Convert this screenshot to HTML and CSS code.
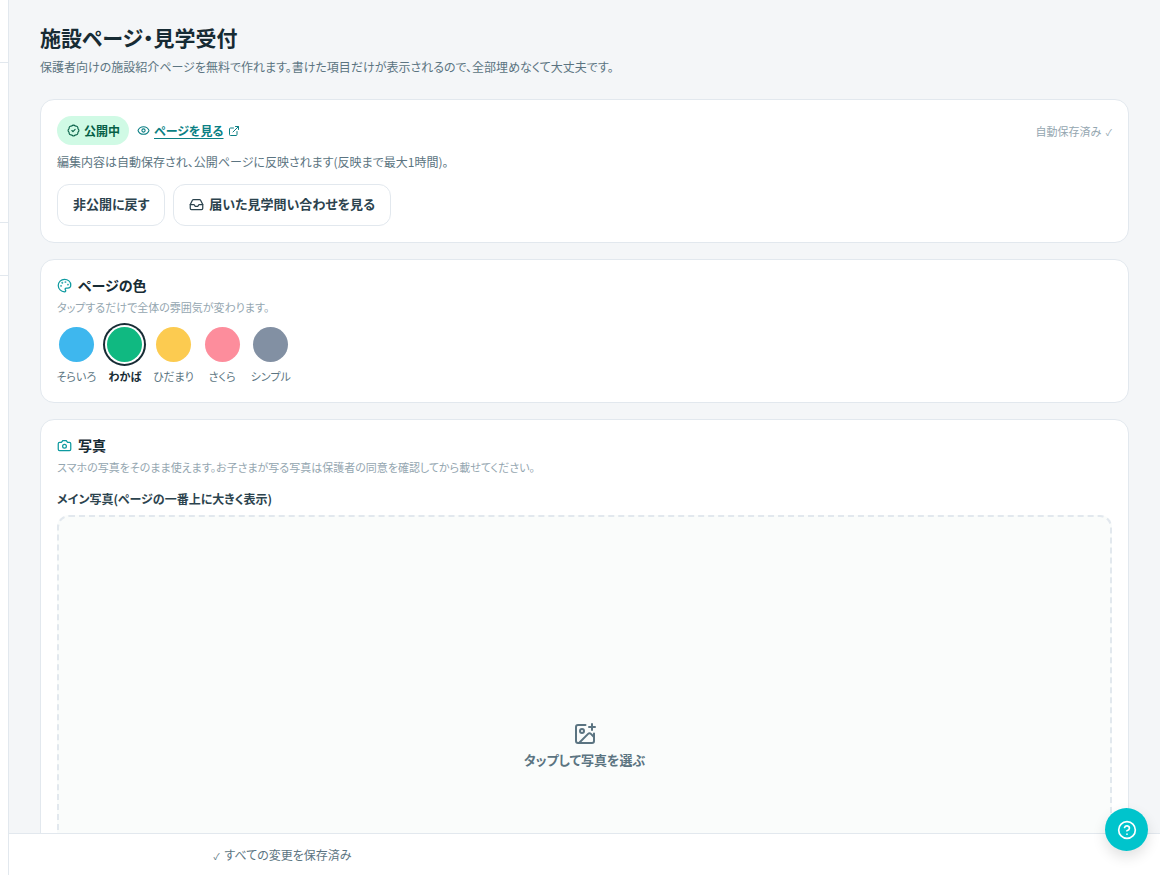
FILE: index.html
```html
<!DOCTYPE html>
<html lang="ja">
<head>
<meta charset="UTF-8">
<meta name="viewport" content="width=device-width, initial-scale=1">
<title>施設ページ・見学受付</title>
<link rel="stylesheet" href="styles.css">
</head>
<body>
<div class="app">
    <aside class="sidebar" aria-label="メニュー">
        <div class="sidebar-logo"></div>
        <div class="sidebar-nav"></div>
        <div class="sidebar-user"></div>
    </aside>

    <main class="main">
        <header class="page-header">
            <h1>施設ページ・見学受付</h1>
            <p>保護者向けの施設紹介ページを無料で作れます。書けた項目だけが表示されるので、全部埋めなくて大丈夫です。</p>
        </header>

        <!-- Publish status -->
        <section class="card">
            <div class="status-row">
                <span class="badge">
                    <svg class="icon icon-sm" viewBox="0 0 24 24"><path d="M3.85 8.62a4 4 0 0 1 4.78-4.77 4 4 0 0 1 6.74 0 4 4 0 0 1 4.78 4.78 4 4 0 0 1 0 6.74 4 4 0 0 1-4.77 4.78 4 4 0 0 1-6.75 0 4 4 0 0 1-4.78-4.77 4 4 0 0 1 0-6.76Z"/><path d="m9 12 2 2 4-4"/></svg>
                    公開中
                </span>
                <a class="view-link" href="#">
                    <svg class="icon icon-sm" viewBox="0 0 24 24"><path d="M2.06 12.35a1 1 0 0 1 0-.7 10.75 10.75 0 0 1 19.88 0 1 1 0 0 1 0 .7 10.75 10.75 0 0 1-19.88 0"/><circle cx="12" cy="12" r="3"/></svg>
                    <span>ページを見る</span>
                    <svg class="icon icon-xs" viewBox="0 0 24 24"><path d="M15 3h6v6"/><path d="M10 14 21 3"/><path d="M18 13v6a2 2 0 0 1-2 2H5a2 2 0 0 1-2-2V8a2 2 0 0 1 2-2h6"/></svg>
                </a>
                <span class="autosave">自動保存済み <span class="check">✓</span></span>
            </div>
            <p class="status-note">編集内容は自動保存され、公開ページに反映されます(反映まで最大1時間)。</p>
            <div class="actions">
                <button type="button" class="btn">非公開に戻す</button>
                <button type="button" class="btn">
                    <svg class="icon icon-md" viewBox="0 0 24 24"><path d="M22 12h-6l-2 3h-4l-2-3H2"/><path d="M5.45 5.11 2 12v6a2 2 0 0 0 2 2h16a2 2 0 0 0 2-2v-6l-3.45-6.89A2 2 0 0 0 16.76 4H7.24a2 2 0 0 0-1.79 1.11z"/></svg>
                    届いた見学問い合わせを見る
                </button>
            </div>
        </section>

        <!-- Theme color -->
        <section class="card">
            <h2>
                <svg class="icon icon-md" viewBox="0 0 24 24"><path d="M12 22a1 1 0 0 1 0-20 10 9 0 0 1 10 9 5 5 0 0 1-5 5h-2.25a1.75 1.75 0 0 0-1.4 2.8l.3.4a1.75 1.75 0 0 1-1.4 2.8z"/><circle cx="13.5" cy="6.5" r=".5"/><circle cx="17.5" cy="10.5" r=".5"/><circle cx="6.5" cy="12.5" r=".5"/><circle cx="8.5" cy="7.5" r=".5"/></svg>
                ページの色
            </h2>
            <p class="hint">タップするだけで全体の雰囲気が変わります。</p>
            <div class="swatches" role="radiogroup" aria-label="ページの色">
                <label class="swatch sky"><input type="radio" name="theme"><span>そらいろ</span></label>
                <label class="swatch leaf"><input type="radio" name="theme" checked><span>わかば</span></label>
                <label class="swatch sun"><input type="radio" name="theme"><span>ひだまり</span></label>
                <label class="swatch sakura"><input type="radio" name="theme"><span>さくら</span></label>
                <label class="swatch simple"><input type="radio" name="theme"><span>シンプル</span></label>
            </div>
        </section>

        <!-- Photos -->
        <section class="card">
            <h2>
                <svg class="icon icon-md" viewBox="0 0 24 24"><path d="M14.5 4h-5L7 7H4a2 2 0 0 0-2 2v9a2 2 0 0 0 2 2h16a2 2 0 0 0 2-2V9a2 2 0 0 0-2-2h-3l-2.5-3z"/><circle cx="12" cy="13" r="3"/></svg>
                写真
            </h2>
            <p class="hint">スマホの写真をそのまま使えます。お子さまが写る写真は保護者の同意を確認してから載せてください。</p>
            <h3>メイン写真(ページの一番上に大きく表示)</h3>
            <label class="dropzone">
                <input type="file" accept="image/*">
                <svg class="icon icon-lg" viewBox="0 0 24 24"><path d="M16 5h6"/><path d="M19 2v6"/><path d="M21 11.5V19a2 2 0 0 1-2 2H5a2 2 0 0 1-2-2V5a2 2 0 0 1 2-2h7.5"/><path d="m21 15-3.09-3.09a2 2 0 0 0-2.82 0L6 21"/><circle cx="9" cy="9" r="2"/></svg>
                <span>タップして写真を選ぶ</span>
            </label>
        </section>
    </main>
</div>

<footer class="save-bar">
    <p><span class="check">✓</span> すべての変更を保存済み</p>
</footer>

<button type="button" class="help-btn" aria-label="ヘルプ">
    <svg class="icon icon-help" viewBox="0 0 24 24"><circle cx="12" cy="12" r="10"/><path d="M9.09 9a3 3 0 0 1 5.83 1c0 2-3 3-3 3"/><path d="M12 17h.01"/></svg>
</button>
</body>
</html>
```

FILE: styles.css
```css
* {
    box-sizing: border-box;
}

html {
    scrollbar-width: none;
}

body {
    margin: 0;
    font-family: "Noto Sans CJK JP", sans-serif;
    font-feature-settings: "palt";
    font-size: 12px;
    line-height: 20px;
    background: #f4f6f8;
    color: #5b7481;
}

h1, h2, h3, p {
    margin: 0;
}

button {
    font: inherit;
    font-feature-settings: inherit;
    cursor: pointer;
}

.app {
    display: flex;
    min-height: 100vh;
}

/* Sidebar */
.sidebar {
    position: sticky;
    top: 0;
    flex: none;
    width: 9px;
    height: 100vh;
    background: #fff;
    border-right: 1px solid #e2e8ee;
}

.sidebar-logo,
.sidebar-nav,
.sidebar-user {
    border-bottom: 1px solid #e2e8ee;
}

.sidebar-logo {
    height: 63px;
}

.sidebar-nav {
    height: 160px;
}

.sidebar-user {
    height: 53px;
}

/* Main column */
.main {
    flex: 1;
    min-width: 0;
    display: flex;
    flex-direction: column;
    gap: 16px;
    padding: 22px 31px 64px;
}

.page-header {
    margin-bottom: 6px;
}

h1 {
    font-size: 21px;
    line-height: 30px;
    margin-bottom: 5px;
    color: #172b34;
}

.card {
    background: #fff;
    border: 1px solid #e2e8ee;
    border-radius: 14px;
    padding: 16px;
}

h2 {
    display: flex;
    align-items: center;
    gap: 6px;
    font-size: 14px;
    line-height: 18px;
    color: #172b34;
}

h2 .icon {
    color: #0e9aa0;
}

h3 {
    margin: 12px 0 6px;
    font-size: 12px;
    line-height: 20px;
    color: #2c434e;
}

.hint {
    margin-top: 3px;
    font-size: 11px;
    color: #94a6b0;
}

.check {
    margin: 0 2px 0 1px;
    font-size: 9px;
    line-height: 1;
}

/* Icons */
.icon {
    flex: none;
    fill: none;
    stroke: currentColor;
    stroke-width: 2;
    stroke-linecap: round;
    stroke-linejoin: round;
}

.icon-xs {
    width: 12px;
    height: 12px;
}

.icon-sm {
    width: 13px;
    height: 13px;
}

.icon-md {
    width: 15px;
    height: 15px;
}

.icon-lg {
    width: 24px;
    height: 24px;
}

.icon-help {
    width: 20px;
    height: 20px;
}

/* Status card */
.status-row {
    display: flex;
    align-items: center;
    gap: 8px;
}

.badge {
    display: flex;
    align-items: center;
    gap: 4px;
    height: 29px;
    padding: 0 9px 0 10px;
    border-radius: 15px;
    background: #d0fae5;
    color: #065f46;
    font-weight: 700;
}

.view-link {
    display: flex;
    align-items: center;
    gap: 4px;
    color: #0b7f84;
    font-weight: 700;
    text-decoration: none;
}

.view-link span {
    text-decoration: underline;
    text-underline-offset: 2px;
}

.autosave {
    margin-left: auto;
    font-size: 11px;
    color: #94a6b0;
}

.autosave .check {
    margin: 0 0 0 2px;
}

.status-note {
    margin-top: 7px;
}

.actions {
    display: flex;
    gap: 8px;
    margin-top: 12px;
}

.btn {
    display: flex;
    align-items: center;
    gap: 5px;
    height: 42px;
    padding: 0 15px 2px;
    border: 1px solid #e2e8ee;
    border-radius: 12px;
    background: #fff;
    color: #2c434e;
    font-size: 13px;
    font-weight: 700;
}

/* Theme swatches */
.swatches {
    display: grid;
    grid-template-columns: repeat(5, 1fr);
    gap: 10px;
    width: 233px;
    margin-top: 10px;
}

.swatch {
    display: flex;
    flex-direction: column;
    align-items: center;
    gap: 4px;
    min-width: 0;
    font-size: 11px;
    white-space: nowrap;
    cursor: pointer;
}

.swatch input {
    appearance: none;
    width: 35px;
    height: 35px;
    margin: 0;
    border-radius: 50%;
    cursor: pointer;
}

.swatch input:checked {
    box-shadow: 0 0 0 2px #fff, 0 0 0 4px #172b34;
}

.swatch input:checked + span {
    color: #172b34;
    font-weight: 700;
}

.sky input {
    background: #3eb7ee;
}

.leaf input {
    background: #10b981;
}

.sun input {
    background: #fccb50;
}

.sakura input {
    background: #fd8d9c;
}

.simple input {
    background: #8290a3;
}

/* Photo picker */
.dropzone {
    display: flex;
    flex-direction: column;
    align-items: center;
    justify-content: center;
    gap: 4px;
    aspect-ratio: 16 / 7;
    border: 2px dashed #e2e8ee;
    border-radius: 12px;
    background: #fafcfb;
    font-size: 13px;
    font-weight: 700;
    cursor: pointer;
}

.dropzone input {
    position: absolute;
    width: 1px;
    height: 1px;
    opacity: 0;
}

/* Bottom bar */
.save-bar {
    position: fixed;
    left: 9px;
    right: 0;
    bottom: 0;
    padding: 11px 0 10px;
    background: #fff;
    border-top: 1px solid #e2e8ee;
}

.save-bar p {
    max-width: 744px;
    margin: 0 auto;
}

.help-btn {
    position: fixed;
    right: 12px;
    bottom: 24px;
    display: flex;
    align-items: center;
    justify-content: center;
    width: 43px;
    height: 43px;
    padding: 0;
    border: 0;
    border-radius: 50%;
    background: #00c4cc;
    color: #fff;
    box-shadow: 0 6px 14px rgba(0, 0, 0, 0.12);
}
```
